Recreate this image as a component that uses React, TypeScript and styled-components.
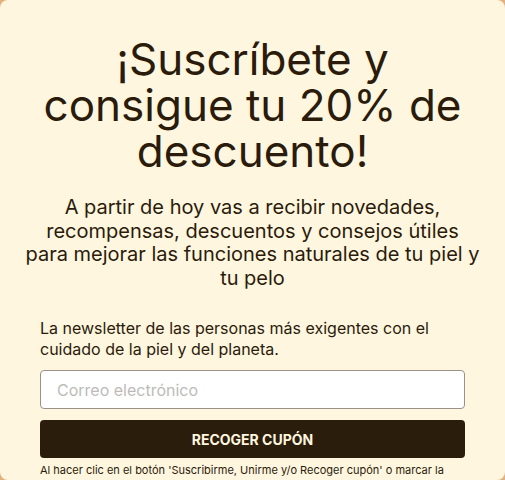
import styled, { createGlobalStyle } from "styled-components";

const GlobalStyle = createGlobalStyle`
  html, body {
    margin: 0;
    padding: 0;
    background: #e2b17f;
  }
  * {
    box-sizing: border-box;
  }
`;

const App = () => {
  return (
    <>
      <GlobalStyle />
      <Card>
        <Title>¡Suscríbete y consigue tu 20% de descuento!</Title>
        <Lead>
          A partir de hoy vas a recibir novedades, recompensas, descuentos y
          consejos útiles para mejorar las funciones naturales de tu piel y tu
          pelo
        </Lead>
        <Form onSubmit={(e) => e.preventDefault()}>
          <Intro>
            La newsletter de las personas más exigentes con el cuidado de la
            piel y del planeta.
          </Intro>
          <EmailInput type="email" placeholder="Correo electrónico" />
          <SubmitBtn type="submit">RECOGER CUPÓN</SubmitBtn>
          <Legal>
            Al hacer clic en el botón 'Suscribirme, Unirme y/o Recoger cupón' o
            marcar la casilla, aceptas recibir comunicaciones de marketing.
          </Legal>
        </Form>
      </Card>
    </>
  );
};

export default App;

const Card = styled.div`
  width: 505px;
  height: 480px;
  overflow: hidden;
  background: #fff6df;
  border-radius: 8px;
  padding: 36px 22px 0;
  color: #2a1b0b;
  font-family: Inter, "Noto Sans", sans-serif;
  display: flex;
  flex-direction: column;
  align-items: center;
`;

const Title = styled.h1`
  margin: 0;
  width: 440px;
  font-size: 44px;
  line-height: 46px;
  font-weight: 400;
  text-align: center;
`;

const Lead = styled.p`
  margin: 22px 0 0;
  max-width: 456px;
  font-size: 20px;
  line-height: 23.5px;
  text-align: center;
`;

const Form = styled.form`
  margin-top: 28px;
  width: 425px;
  display: flex;
  flex-direction: column;
`;

const Intro = styled.p`
  margin: 0 0 10px;
  font-size: 16px;
  line-height: 21px;
`;

const EmailInput = styled.input`
  height: 39px;
  flex-shrink: 0;
  border: 1px solid #9c918a;
  border-radius: 4px;
  background: #ffffff;
  padding: 0 16px;
  font-family: Inter, "Noto Sans", sans-serif;
  font-size: 16px;
  color: #2a1b0b;

  &::placeholder {
    color: #bdbbb8;
  }
`;

const SubmitBtn = styled.button`
  margin-top: 11px;
  height: 38px;
  flex-shrink: 0;
  border: none;
  border-radius: 4px;
  background: #2b1d0c;
  color: #fff6df;
  font-family: Inter, "Noto Sans", sans-serif;
  font-size: 14px;
  font-weight: 700;
  cursor: pointer;
`;

const Legal = styled.p`
  margin: 3px 0 0;
  font-size: 11px;
  line-height: 18px;
`;
